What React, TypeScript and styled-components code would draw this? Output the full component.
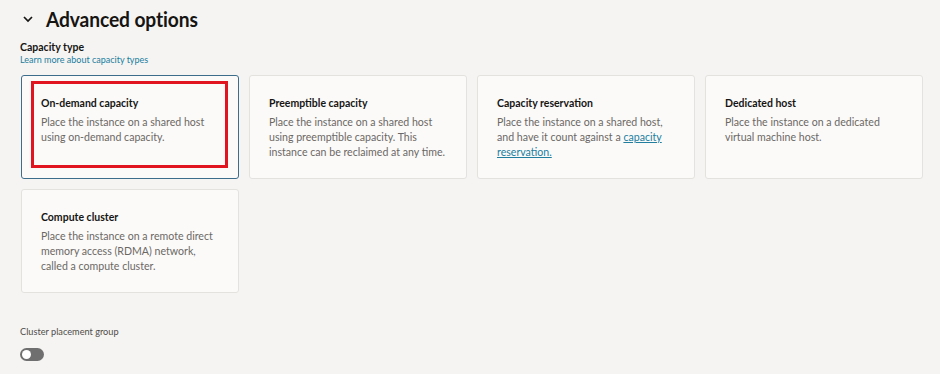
import React, { useState } from 'react'
import styled, { createGlobalStyle } from 'styled-components';

const GlobalStyle = createGlobalStyle`
  html, body {
    margin: 0;
    padding: 0;
    background: #f5f4f2;
    font-family: Lato, "Noto Sans", sans-serif;
    color: #161513;
  }
`;

const Page = styled.main`
  width: 940px;
  height: 374px;
  padding: 6px 19px 0 20px;
  box-sizing: border-box;
  overflow: hidden;
`;

const Header = styled.div`
  display: flex;
  align-items: center;
  gap: 12px;
  padding-left: 2px;
  height: 26px;
`;

const Chevron = styled.svg`
  width: 12px;
  height: 12px;
`;

const Title = styled.h2`
  margin: 0;
  font-size: 19.2px;
  font-weight: 700;
  letter-spacing: -0.1px;
  transform: scaleY(1.06);
`;

const FieldLabel = styled.div`
  margin-top: 8px;
  font-size: 10.5px;
  font-weight: 700;
  color: #161513;
  line-height: 14px;
`;

const HelpLink = styled.a`
  display: block;
  font-size: 9px;
  line-height: 12px;
  color: #227e9e;
  text-decoration: none;
`;

const CardGrid = styled.div`
  display: grid;
  grid-template-columns: repeat(4, 218px);
  column-gap: 10px;
  row-gap: 10px;
  margin-top: 9px;
  margin-left: 1px;
`;

const Card = styled.div<{ $selected?: boolean }>`
  position: relative;
  height: 104px;
  box-sizing: border-box;
  padding: 20px 12px 0 19px;
  background: #fbfaf9;
  border: ${p => (p.$selected ? '1.5px solid #3c6e8c' : '1px solid #e4e2df')};
  border-radius: 3px;
  cursor: pointer;
`;

const CardTitle = styled.div`
  font-size: 10.5px;
  font-weight: 700;
  line-height: 15px;
  color: #161513;
`;

const CardText = styled.p`
  margin: 4px 0 0;
  font-size: 10.6px;
  line-height: 15px;
  color: #6b6864;
  white-space: nowrap;
`;

const InlineLink = styled.a`
  color: #227e9e;
  text-decoration: underline;
`;

const Highlight = styled.div`
  position: absolute;
  left: 9px;
  top: 5px;
  width: 197px;
  height: 87px;
  box-sizing: border-box;
  border: 3px solid #e0151f;
  pointer-events: none;
`;

const ToggleLabel = styled.div`
  margin-top: 33px;
  font-size: 9.2px;
  line-height: 12px;
  color: #4f4c48;
`;

const Switch = styled.button<{ $on: boolean }>`
  display: block;
  position: relative;
  margin-top: 10px;
  width: 24px;
  height: 13px;
  padding: 0;
  border: none;
  border-radius: 7px;
  background: ${p => (p.$on ? '#227e9e' : '#6f6f6f')};
  cursor: pointer;
  &::after {
    content: '';
    position: absolute;
    top: 2px;
    left: ${p => (p.$on ? '13px' : '2px')};
    width: 9px;
    height: 9px;
    border-radius: 50%;
    background: #fff;
  }
`;

// lines broken as the console lays them out
const capacityTypes = [
  {
    title: 'On-demand capacity',
    text: <>Place the instance on a shared host<br />using on-demand capacity.</>,
  },
  {
    title: 'Preemptible capacity',
    text: <>Place the instance on a shared host<br />using preemptible capacity. This<br />instance can be reclaimed at any time.</>,
  },
  {
    title: 'Capacity reservation',
    text: (
      <>
        Place the instance on a shared host,<br />and have it count against a{' '}
        <InlineLink href="#">capacity<br />reservation.</InlineLink>
      </>
    ),
  },
  {
    title: 'Dedicated host',
    text: <>Place the instance on a dedicated<br />virtual machine host.</>,
  },
  {
    title: 'Compute cluster',
    text: <>Place the instance on a remote direct<br />memory access (RDMA) network,<br />called a compute cluster.</>,
  },
];

export default function App() {
  const [selected, setSelected] = useState(0);
  const [cluster, setCluster] = useState(false);

  return (
    <>
      <GlobalStyle />
      <Page>
        <Header>
          <Chevron viewBox="0 0 12 12">
            <path d="M2 4 L6 8 L10 4" fill="none" stroke="#161513" strokeWidth="1.7" />
          </Chevron>
          <Title>Advanced options</Title>
        </Header>

        <FieldLabel>Capacity type</FieldLabel>
        <HelpLink href="#">Learn more about capacity types</HelpLink>

        <CardGrid>
          {capacityTypes.map((c, index) => (
            <Card key={c.title} $selected={index === selected} onClick={() => setSelected(index)}>
              {index === 0 && <Highlight />}
              <CardTitle>{c.title}</CardTitle>
              <CardText>{c.text}</CardText>
            </Card>
          ))}
        </CardGrid>

        <ToggleLabel>Cluster placement group</ToggleLabel>
        <Switch $on={cluster} onClick={() => setCluster(!cluster)} />
      </Page>
    </>
  )
}
